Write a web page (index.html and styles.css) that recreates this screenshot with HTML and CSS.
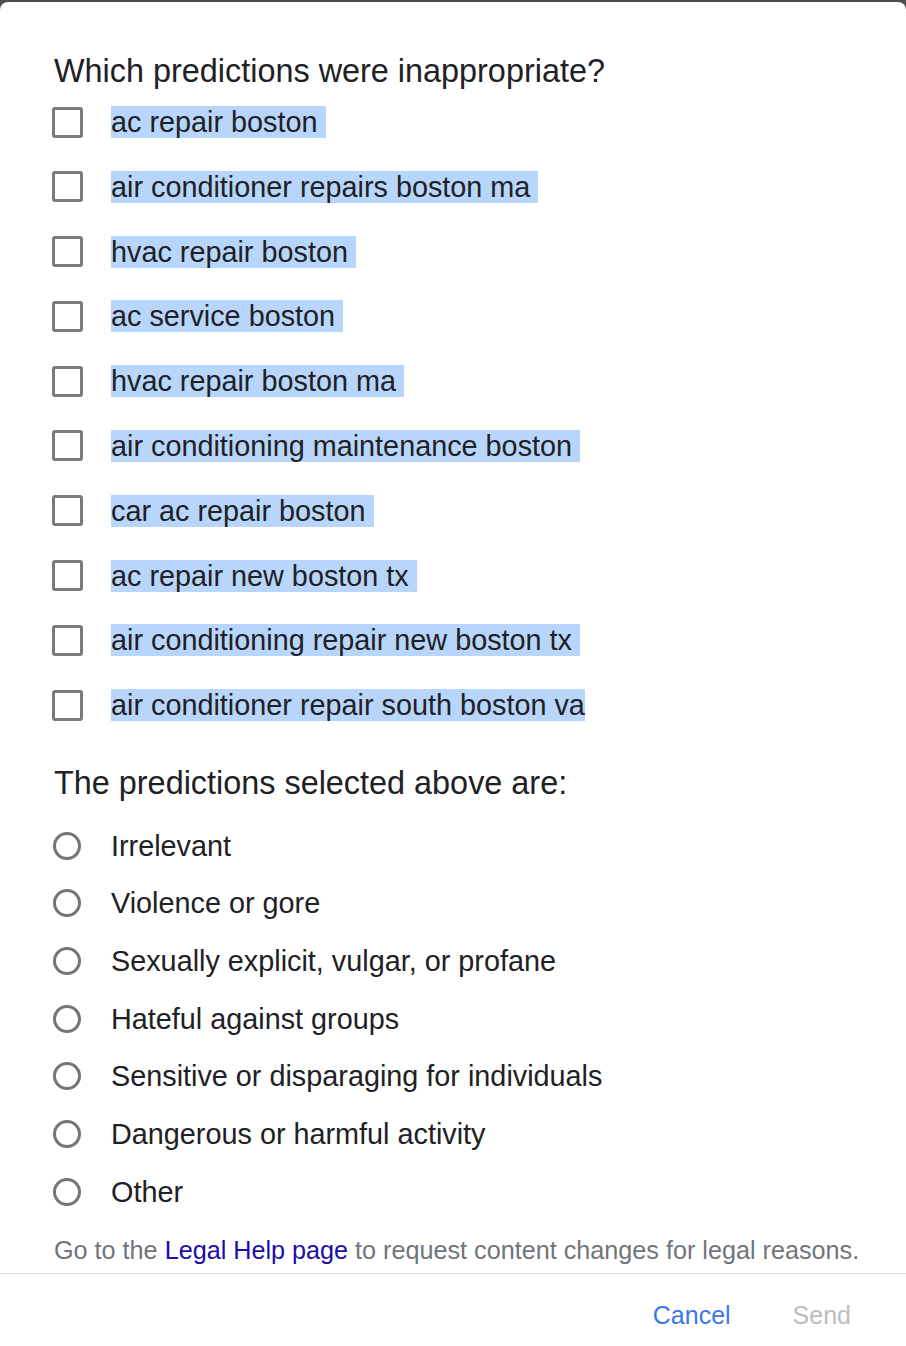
FILE: index.html
```html
<!DOCTYPE html>
<html lang="en">
<head>
<meta charset="utf-8">
<title>Report inappropriate predictions</title>
<link rel="stylesheet" href="styles.css">
</head>
<body>
<div class="dialog">
  <div class="content">
    <h2 class="heading">Which predictions were inappropriate?</h2>
    <div class="checks">
      <label class="check-row"><span class="box"></span><span class="label sel">ac repair boston </span></label>
      <label class="check-row"><span class="box"></span><span class="label sel">air conditioner repairs boston ma </span></label>
      <label class="check-row"><span class="box"></span><span class="label sel">hvac repair boston </span></label>
      <label class="check-row"><span class="box"></span><span class="label sel">ac service boston </span></label>
      <label class="check-row"><span class="box"></span><span class="label sel">hvac repair boston ma </span></label>
      <label class="check-row"><span class="box"></span><span class="label sel">air conditioning maintenance boston </span></label>
      <label class="check-row"><span class="box"></span><span class="label sel">car ac repair boston </span></label>
      <label class="check-row"><span class="box"></span><span class="label sel">ac repair new boston tx </span></label>
      <label class="check-row"><span class="box"></span><span class="label sel">air conditioning repair new boston tx </span></label>
      <label class="check-row"><span class="box"></span><span class="label sel">air conditioner repair south boston va</span></label>
    </div>
    <h2 class="heading heading-2">The predictions selected above are:</h2>
    <div class="radios">
      <label class="radio-row"><span class="circle"></span><span class="label">Irrelevant</span></label>
      <label class="radio-row"><span class="circle"></span><span class="label">Violence or gore</span></label>
      <label class="radio-row"><span class="circle"></span><span class="label">Sexually explicit, vulgar, or profane</span></label>
      <label class="radio-row"><span class="circle"></span><span class="label">Hateful against groups</span></label>
      <label class="radio-row"><span class="circle"></span><span class="label">Sensitive or disparaging for individuals</span></label>
      <label class="radio-row"><span class="circle"></span><span class="label">Dangerous or harmful activity</span></label>
      <label class="radio-row"><span class="circle"></span><span class="label">Other</span></label>
    </div>
    <p class="legal">Go to the <a class="legal-link" href="#">Legal Help page</a> to request content changes for legal reasons.</p>
  </div>
  <div class="footer">
    <span class="btn btn-cancel">Cancel</span>
    <span class="btn btn-send">Send</span>
  </div>
</div>
</body>
</html>
```
FILE: styles.css
```css
html, body {
  margin: 0;
  padding: 0;
  background: #4d4d4d;
}
body {
  font-family: "Liberation Sans", Arial, sans-serif;
  color: #202124;
  padding-top: 2px;
}
.dialog {
  background: #fff;
  border-radius: 8px 8px 0 0;
  min-height: 1344px;
}
.content {
  padding: 51px 0 0 54px;
}
.heading {
  margin: 0;
  font-weight: normal;
  font-size: 32.4px;
  line-height: 37px;
  color: #202124;
}
.checks {
  margin-top: 16px;
  display: flex;
  flex-direction: column;
  gap: 32.8px;
}
.check-row, .radio-row {
  display: flex;
  align-items: center;
  height: 32px;
}
.box {
  flex: none;
  width: 31px;
  height: 31px;
  box-sizing: border-box;
  border: 3px solid #7a7a7a;
  border-radius: 3px;
  margin-left: -2px;
  margin-right: 28px;
}
.label {
  font-size: 28.8px;
  line-height: 32px;
  white-space: pre;
  color: #202124;
}
.sel {
  background: #b8d6fb;
}
.heading-2 {
  margin-top: 44px;
}
.radios {
  margin-top: 27.5px;
  display: flex;
  flex-direction: column;
  gap: 25.7px;
}
.circle {
  flex: none;
  width: 28px;
  height: 28px;
  box-sizing: border-box;
  border: 3px solid #757575;
  border-radius: 50%;
  margin-left: -1px;
  margin-right: 30px;
}
.legal {
  margin: 28px 0 0;
  font-size: 25.2px;
  line-height: 28px;
  color: #70757a;
  padding-bottom: 9px;
}
.legal-link {
  color: #1a0dab;
  text-decoration: none;
}
.footer {
  border-top: 1px solid #dadce0;
  display: flex;
  justify-content: flex-end;
  gap: 62px;
  padding: 26px 55px 0 0;
}
.btn {
  font-size: 25px;
  line-height: 30px;
}
.btn-cancel {
  color: #3b78e7;
}
.btn-send {
  color: #bdbdbd;
}
```
